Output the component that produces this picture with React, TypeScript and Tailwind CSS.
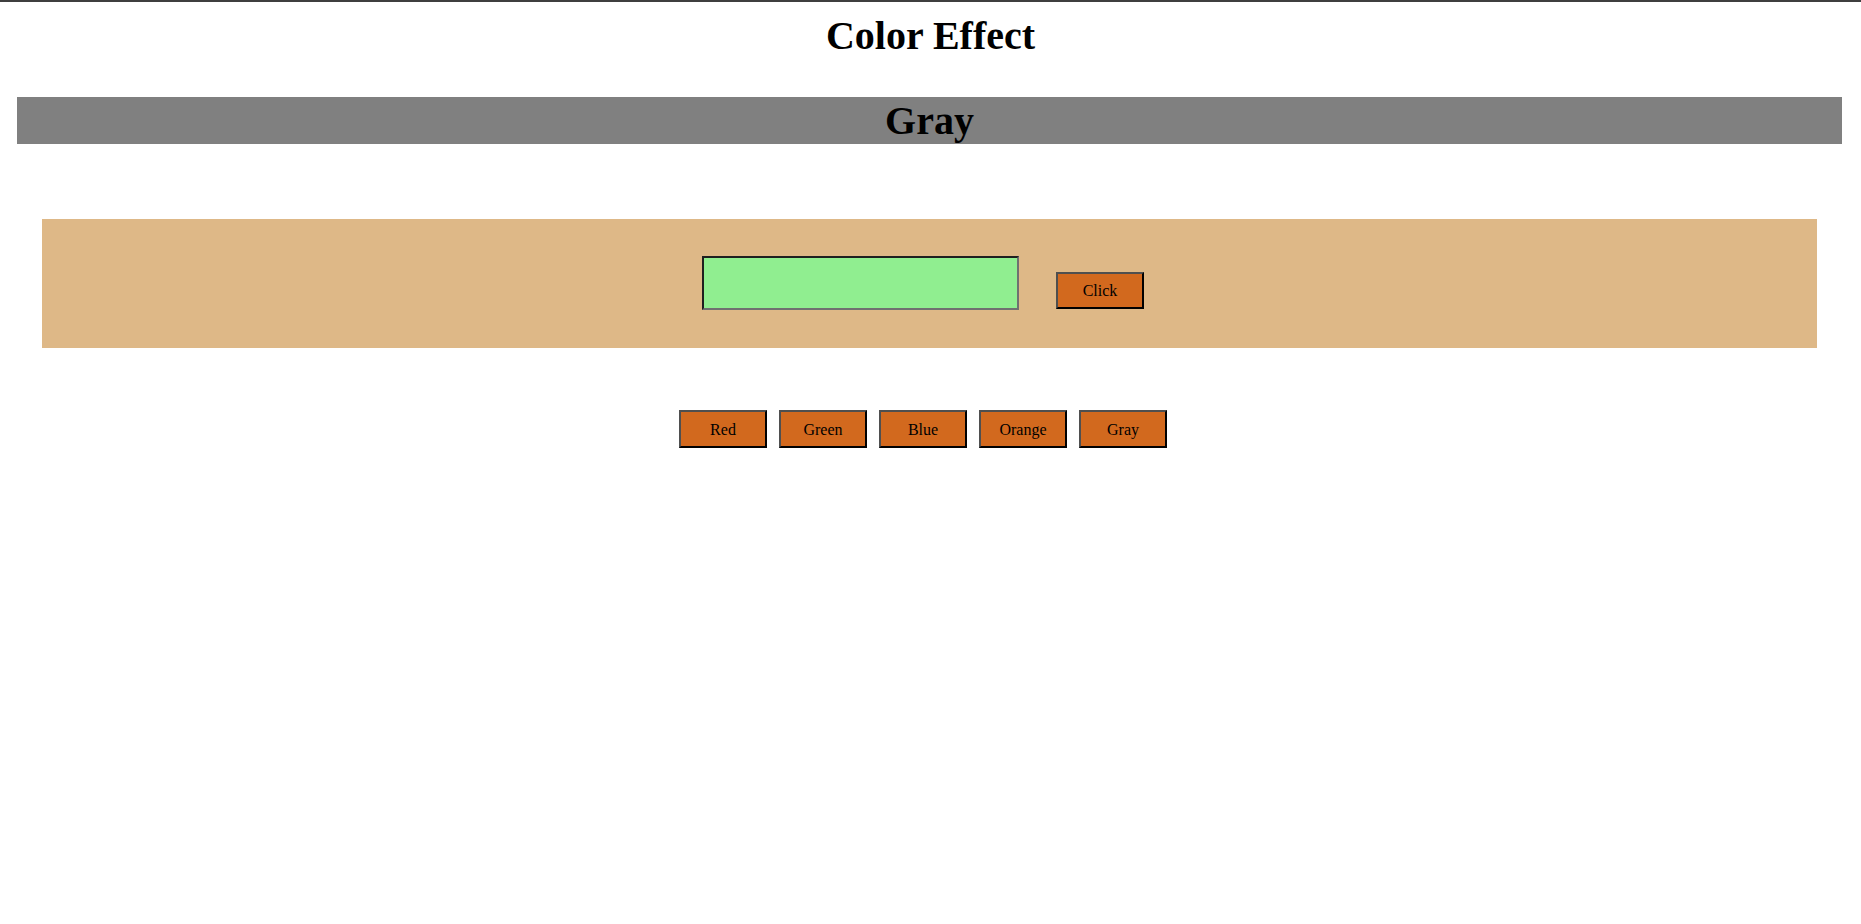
import React from "react";

export default function App() {
  const colors = ["Red", "Green", "Blue", "Orange", "Gray"];
  return (
    <div className="min-h-screen bg-white border-t-2 border-[#3f3f3f] font-['Liberation_Serif',serif] text-black">
      <h1 className="mt-[11px] text-center text-[40px] leading-[46px] font-bold">Color Effect</h1>
      <h2 className="ml-[17px] mr-[19px] mt-[38px] h-[47px] bg-[#808080] text-center text-[40px] leading-[47px] font-bold">
        Gray
      </h2>
      <div className="ml-[42px] mr-[44px] mt-[75px] h-[129px] bg-[#deb887] flex justify-center items-start pt-[37px] pr-[13px]">
        <input
          type="text"
          className="w-[317px] h-[54px] bg-[#90ee90] border-2 border-t-[#1f1f1f] border-l-[#1f1f1f] border-b-[#707070] border-r-[#707070] outline-none"
        />
        <button className="ml-[37px] mt-[16px] w-[88px] h-[37px] pt-[1px] bg-[#d2691e] border-2 border-t-[#4f4f4f] border-l-[#4f4f4f] border-b-black border-r-black text-[16px] leading-none">
          Click
        </button>
      </div>
      <div className="mt-[62px] flex justify-center gap-[12px] pr-[15px]">
        {colors.map((c) => (
          <button
            key={c}
            className="w-[88px] h-[38px] pt-[1px] bg-[#d2691e] border-2 border-t-[#4f4f4f] border-l-[#4f4f4f] border-b-black border-r-black text-[16px] leading-none"
          >
            {c}
          </button>
        ))}
      </div>
    </div>
  );
}
